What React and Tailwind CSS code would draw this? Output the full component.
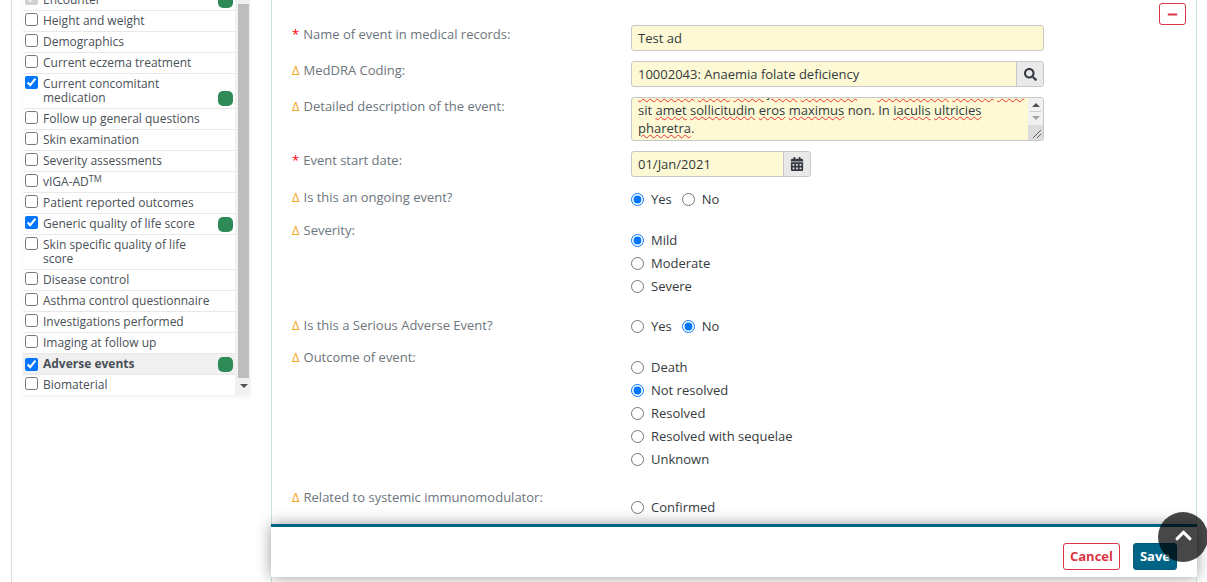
import { FaSearch, FaCalendarAlt, FaChevronUp, FaMinus } from "react-icons/fa";

const sections = [
  { name: "Encounter", checked: true, disabled: true, done: true, first: true },
  { name: "Height and weight" },
  { name: "Demographics" },
  { name: "Current eczema treatment" },
  { name: "Current concomitant medication", checked: true, done: true },
  { name: "Follow up general questions" },
  { name: "Skin examination" },
  { name: "Severity assessments" },
  { name: "vIGA-AD", tm: true },
  { name: "Patient reported outcomes" },
  { name: "Generic quality of life score", checked: true, done: true },
  { name: "Skin specific quality of life score" },
  { name: "Disease control" },
  { name: "Asthma control questionnaire" },
  { name: "Investigations performed" },
  { name: "Imaging at follow up" },
  { name: "Adverse events", checked: true, done: true, active: true },
  { name: "Biomaterial" },
];

function SectionRow({ item }) {
  return (
    <div
      className={`flex border-b border-[#e8e8e8] pl-[2px] pr-[2px] last:border-b-0 ${
        item.active ? "bg-[#f0f0f0] font-bold" : ""
      } ${item.first ? "h-[32px] -mt-[21px] pt-[11px]" : ""}`}
    >
      <input
        type="checkbox"
        readOnly
        disabled={item.disabled}
        checked={!!item.checked}
        className={`m-0 h-[13px] w-[13px] shrink-0 ${item.active ? "mt-[4px]" : "mt-[2px]"}`}
      />
      <div className="ml-[5px] w-[170px] shrink-0 text-[12px] leading-[14px] pt-[3px] pb-[3px]">
        {item.name}
        {item.tm && <sup className="text-[9px]">TM</sup>}
      </div>
      {item.done && (
        <div className="ml-auto mt-auto mb-[2px] h-[15px] w-[15px] rounded-[5px] bg-[#2e8b57]"></div>
      )}
    </div>
  );
}

function Label({ mark, children, className = "" }) {
  return (
    <div className={`w-[339px] shrink-0 text-[13px] leading-[18px] text-[#6c757d] ${className}`}>
      {mark === "*" ? (
        <span className="text-[#ff0000] mr-[4px]">*</span>
      ) : (
        <span className="text-[#f5a623] mr-[4px]">Δ</span>
      )}
      {children}
    </div>
  );
}

function Radio({ label, checked }) {
  return (
    <label className="flex items-center text-[13px] leading-[18px] text-[#343a40]">
      <input type="radio" readOnly checked={!!checked} className="m-0 h-[13px] w-[13px]" />
      <span className="ml-[7px]">{label}</span>
    </label>
  );
}

function RadioStack({ options, checked }) {
  return (
    <div className="flex flex-col gap-[5px]">
      {options.map((o) => (
        <Radio key={o} label={o} checked={o === checked} />
      ))}
    </div>
  );
}

function Word({ children }) {
  return <span className="underline decoration-wavy decoration-[#ee3333] decoration-1">{children}</span>;
}

const fieldBox = "border border-[#c8c8c8] rounded-[3px] bg-[#fdf9d4] text-[13px] text-[#343a40]";

export default function App() {
  return (
    <div className="relative h-[582px] w-[1207px] overflow-hidden bg-white font-['Open_Sans',sans-serif]">
      <div className="flex h-full">
        {/* LEFT COLUMN */}
        <div className="h-full w-[271px] shrink-0 pl-[11px]">
          <div className="h-full border-l border-[#dddddd] pl-[11px]">
            <div className="flex w-[227px] overflow-hidden shadow-[0_2px_4px_rgba(0,0,0,0.06)]">
              <div className="w-[212px] shrink-0 text-[#495057]">
                {sections.map((s) => (
                  <SectionRow key={s.name} item={s} />
                ))}
              </div>
              <div className="flex w-[15px] shrink-0 flex-col bg-[#f1f1f1] pl-[3px] pr-[1px]">
                <div className="mt-[4px] h-[374px] bg-[#bdbdbd]"></div>
                <div className="mx-auto mt-[6px] h-0 w-0 border-x-[4px] border-t-[4px] border-x-transparent border-t-[#505050]"></div>
              </div>
            </div>
          </div>
        </div>

        {/* EVENT PANEL */}
        <div className="flex h-full w-[926px] shrink-0 justify-between border-x border-[#c9e6d6] pl-[20px] pr-[10px]">
          <div className="pt-[25px]">
            <div className="flex">
              <Label mark="*">Name of event in medical records:</Label>
              <div className={`${fieldBox} flex h-[26px] w-[413px] items-center px-[6px] pt-[1px]`}>Test ad</div>
            </div>

            <div className="mt-[10px] flex">
              <Label mark="delta">MedDRA Coding:</Label>
              <div className={`${fieldBox} flex h-[26px] w-[413px] items-center overflow-hidden pl-[6px]`}>
                <span className="flex-1 pt-[1px]">10002043: Anaemia folate deficiency</span>
                <div className="flex h-full w-[27px] items-center justify-center border-l border-[#c8c8c8] bg-[#e9e9e9] text-[#343a40]">
                  <FaSearch size={13} />
                </div>
              </div>
            </div>

            <div className="mt-[10px] flex">
              <Label mark="delta">Detailed description of the event:</Label>
              <div className={`${fieldBox} flex h-[44px] w-[413px] overflow-hidden`}>
                <div className="h-full flex-1 overflow-hidden pl-[6px] pr-[4px] leading-[18px]">
                  <div className="-mt-[15px] whitespace-nowrap">
                    <Word>interdum</Word> <Word>dolor</Word> <Word>diam</Word> <Word>justo</Word> <Word>interdum</Word> ac{" "}
                    <Word>consectetur</Word> <Word>viverra</Word> <Word>ante</Word>
                  </div>
                  <div>
                    sit <Word>amet</Word> <Word>sollicitudin</Word> <Word>eros</Word> <Word>maximus</Word> non. In{" "}
                    <Word>iaculis</Word> <Word>ultricies</Word>
                  </div>
                  <div>
                    <Word>pharetra</Word>.
                  </div>
                </div>
                <div className="flex w-[15px] shrink-0 flex-col items-center bg-[#f1f1f1]">
                  <div className="mt-[5px] h-0 w-0 border-x-[4px] border-b-[4px] border-x-transparent border-b-[#505050]"></div>
                  <div className="mt-[4px] h-px w-[11px] bg-[#cccccc]"></div>
                  <div className="mt-[4px] h-0 w-0 border-x-[4px] border-t-[4px] border-x-transparent border-t-[#a3a3a3]"></div>
                  <div className="relative mt-auto h-[15px] w-full bg-[#dcdcdc]">
                    <svg width="15" height="15" viewBox="0 0 15 15" className="block">
                      <path d="M5 13L13 5M9 13L13 9" stroke="#606060" strokeWidth="1" fill="none" />
                    </svg>
                  </div>
                </div>
              </div>
            </div>

            <div className="mt-[10px] flex">
              <Label mark="*">Event start date:</Label>
              <div className={`${fieldBox} flex h-[26px] w-[180px] items-center overflow-hidden pl-[6px]`}>
                <span className="flex-1 pt-[1px]">01/Jan/2021</span>
                <div className="flex h-full w-[27px] items-center justify-center border-l border-[#c8c8c8] bg-[#e9e9e9] text-[#343a40]">
                  <FaCalendarAlt size={14} />
                </div>
              </div>
            </div>

            <div className="mt-[12px] flex">
              <Label mark="delta" className="-mt-[1px]">Is this an ongoing event?</Label>
              <div className="mt-[1px] flex gap-[10px]">
                <Radio label="Yes" checked />
                <Radio label="No" />
              </div>
            </div>

            <div className="mt-[14px] flex">
              <Label mark="delta" className="-mt-[1px]">Severity:</Label>
              <div className="mt-[1px] pt-[8px]">
                <RadioStack options={["Mild", "Moderate", "Severe"]} checked="Mild" />
              </div>
            </div>

            <div className="mt-[22px] flex">
              <Label mark="delta" className="-mt-[1px]">Is this a Serious Adverse Event?</Label>
              <div className="flex gap-[10px]">
                <Radio label="Yes" />
                <Radio label="No" checked />
              </div>
            </div>

            <div className="mt-[14px] flex">
              <Label mark="delta" className="-mt-[1px]">Outcome of event:</Label>
              <div className="mt-[1px] pt-[8px]">
                <RadioStack
                  options={["Death", "Not resolved", "Resolved", "Resolved with sequelae", "Unknown"]}
                  checked="Not resolved"
                />
              </div>
            </div>

            <div className="mt-[21px] flex">
              <Label mark="delta" className="-mt-[1px]">Related to systemic immunomodulator:</Label>
              <div className="mt-[1px] pt-[8px]">
                <Radio label="Confirmed" />
              </div>
            </div>
          </div>

          <button className="mt-[3px] flex h-[22px] w-[27px] shrink-0 items-center justify-center rounded-[3px] border-[1.5px] border-[#dc3545] bg-white text-[#dc3545]">
            <FaMinus size={11} />
          </button>
        </div>
      </div>

      {/* STICKY FOOTER */}
      <div className="absolute bottom-[5px] left-[271px] flex h-[53px] w-[926px] items-end justify-end gap-[13px] border-t-[3px] border-[#006487] bg-white pb-[7px] pr-[20px] shadow-[0_0_14px_rgba(0,0,0,0.4)]">
        <button className="h-[27px] w-[57px] rounded-[3px] border-[1.5px] border-[#dc3545] bg-white text-[13px] font-bold text-[#dc3545]">
          Cancel
        </button>
        <button className="h-[27px] w-[44px] rounded-[3px] border border-[#005a7a] bg-[#006487] text-[13px] font-bold text-white">
          Save
        </button>
      </div>

      {/* SCROLL TO TOP */}
      <div className="absolute left-[1158px] top-[512px] flex h-[50px] w-[50px] items-center justify-center rounded-full bg-[rgba(0,0,0,0.72)] pb-[4px] text-white">
        <FaChevronUp size={19} />
      </div>
    </div>
  );
}
